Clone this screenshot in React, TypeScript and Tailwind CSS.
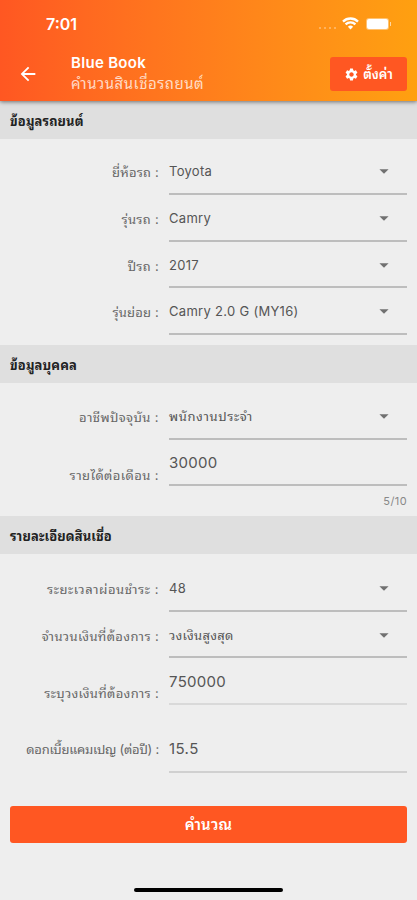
import type { ReactNode } from "react"
import { MdArrowBack, MdArrowDropDown, MdSettings } from "react-icons/md"

function StatusBar() {
  return (
    <div className="h-[47px] flex items-center pl-[46px] pr-[26px]">
      <span className="text-[16px] font-semibold text-white leading-5 pt-px">7:01</span>
      <div className="ml-auto flex items-center">
        <div className="flex gap-[3px] mt-[9px] mr-[6px] opacity-40">
          {[0, 1, 2, 3].map((n) => (
            <span key={n} className="w-[2px] h-[2px] rounded-full bg-white" />
          ))}
        </div>
        <svg width="17" height="13" viewBox="0 0 17 13" fill="none" stroke="#fff" strokeWidth="2.3">
          <path d="M1 4.6a10.6 10.6 0 0 1 15 0" />
          <path d="M3.6 7.4a6.9 6.9 0 0 1 9.8 0" />
          <path d="M8.5 12.6L5.9 9.8a3.7 3.7 0 0 1 5.2 0z" fill="#fff" stroke="none" />
        </svg>
        <div className="ml-[8px] w-[21px] h-[10px] rounded-[2px] bg-white ring-1 ring-white/40" />
        <div className="ml-[2px] w-px h-[4px] bg-white/60" />
      </div>
    </div>
  )
}

function Header() {
  return (
    <header className="relative h-[101px] shrink-0 bg-linear-to-r from-[#ff5722] to-[#ffa010] shadow-[0_1px_4px_rgba(0,0,0,0.5)]">
      <StatusBar />
      <div className="h-[54px] flex items-center pl-[17px] pr-[10px]">
        <MdArrowBack className="w-[22px] h-[22px] text-white" />
        <div className="ml-[32px] -mt-[2px] text-white whitespace-nowrap">
          <h1 className="text-[15px] leading-[21px] font-semibold tracking-[0.3px]">Blue Book</h1>
          <p className="text-[15px] leading-[21px] tracking-[0.5px] text-white/75">คำนวนสินเชื่อรถยนต์</p>
        </div>
        <button className="ml-auto w-[77px] h-[34px] rounded-[3px] bg-[#ff5722] text-white flex items-center justify-center gap-[4px] text-[13px] font-semibold whitespace-nowrap">
          <MdSettings className="w-[15px] h-[15px]" />
          <span className="pt-[2px]">ตั้งค่า</span>
        </button>
      </div>
    </header>
  )
}

function SectionTitle({ children }: { children: ReactNode }) {
  return (
    <h2 className="h-[38px] shrink-0 bg-[#dfdfdf] flex items-center px-[10px] pt-[3px] text-[13px] font-bold tracking-[0.1px] text-[#222]">
      {children}
    </h2>
  )
}

type FieldProps = {
  label: string
  value: string
  className?: string
  labelClass?: string
  valueClass?: string
  lineClass?: string
  select?: boolean
}

function Field({
  label,
  value,
  className = "h-[47px]",
  labelClass = "pt-[3px]",
  valueClass = "tracking-[0.3px]",
  lineClass = "border-[#bdbdbd]",
  select,
}: FieldProps) {
  return (
    <div className={`flex shrink-0 pr-[10px] whitespace-nowrap ${className}`}>
      <div className={`w-[159px] flex items-center justify-end text-[13px] text-[#666] ${labelClass}`}>
        {label} :
      </div>
      <div
        className={`ml-[10px] flex-1 flex items-center justify-between border-b-2 text-[#555] ${lineClass} ${
          select ? "text-[13px]" : "text-[15px]"
        }`}
      >
        <span className={`pt-[3px] ${valueClass}`}>{value}</span>
        {select && <MdArrowDropDown className="w-[22px] h-[22px] mr-[12px] mt-px text-[#707070]" />}
      </div>
    </div>
  )
}

export default function App() {
  return (
    <div className="w-full h-[900px] flex flex-col overflow-hidden bg-[#eee] font-['Inter','Noto_Sans_Thai_Looped','Loma','Waree','Noto_Serif_Thai','Noto_Sans_Thai','Noto_Sans',sans-serif]">
      <Header />

      <SectionTitle>ข้อมูลรถยนต์</SectionTitle>
      <div className="flex flex-col pt-[9px] pb-[10px]">
        <Field select label="ยี่ห้อรถ" value="Toyota" labelClass="pt-[3px] tracking-[0.2px]" />
        <Field select label="รุ่นรถ" value="Camry" labelClass="pt-[3px] tracking-[0.3px]" />
        <Field select label="ปีรถ" value="2017" className="h-[46px]" labelClass="pt-[3px] tracking-[0.3px]" />
        <Field select label="รุ่นย่อย" value="Camry 2.0 G (MY16)" labelClass="pt-[3px] tracking-[0.2px]" />
      </div>

      <SectionTitle>ข้อมูลบุคคล</SectionTitle>
      <div className="flex flex-col pt-[10px]">
        <Field
          select
          label="อาชีพปัจจุบัน"
          value="พนักงานประจำ"
          labelClass="pt-[3px] tracking-[0.4px]"
          valueClass="tracking-[0.6px]"
        />
        <Field label="รายได้ต่อเดือน" value="30000" className="h-[46px]" labelClass="pt-[25px] tracking-[0.4px]" />
        <p className="h-[30px] pr-[10px] flex items-center justify-end text-[11px] tracking-[0.4px] text-[#888]">5/10</p>
      </div>

      <SectionTitle>รายละเอียดสินเชื่อ</SectionTitle>
      <div className="flex flex-col pt-[11px]">
        <Field select label="ระยะเวลาผ่อนชำระ" value="48" labelClass="pt-[3px] tracking-[0.55px]" />
        <Field
          select
          label="จำนวนเงินที่ต้องการ"
          value="วงเงินสูงสุด"
          className="h-[46px]"
          labelClass="pt-[3px] tracking-[0.35px]"
        />
        <Field
          label="ระบุวงเงินที่ต้องการ"
          value="750000"
          labelClass="pt-[25px] tracking-[0.3px]"
          lineClass="border-[#d9d9d9]"
        />
        <Field
          label="ดอกเบี้ยแคมเปญ (ต่อปี)"
          value="15.5"
          className="mt-[21px] h-[47px]"
          labelClass="pt-px tracking-[-0.25px]"
          valueClass="-mt-[2px] tracking-[0.4px]"
          lineClass="border-[#d0d0d0]"
        />
      </div>

      <button className="mx-[10px] mt-[33px] h-[37px] shrink-0 rounded-[3px] bg-[#ff5722] text-[15px] font-semibold tracking-[0.2px] text-white pt-[2px]">
        คำนวณ
      </button>
      <div className="mt-[45px] mx-auto w-[149px] h-[4px] shrink-0 rounded-full bg-black" />
    </div>
  )
}
